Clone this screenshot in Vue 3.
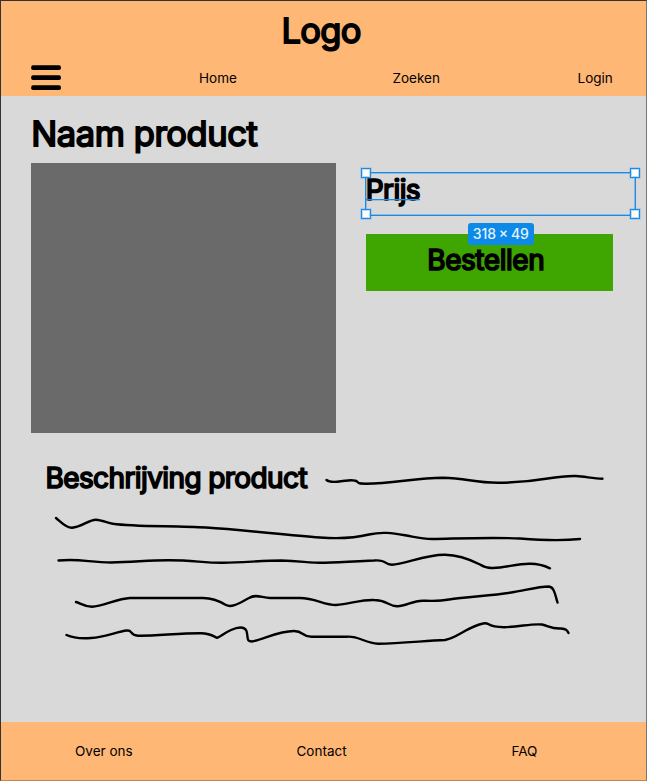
<script setup>
const handles = ['nw', 'ne', 'sw', 'se']
const strokes = [
  'M56 518C61 522 66 528 72 527.8C82 527 89 519.5 96 519.7C101 520 107 522.5 113 523.7C135 527 175 525.5 206 527.5C245 530 285 535 320 537.5C340 539 357 537.5 369 534.5C382 531.5 392 533 405 535.3C415 537 422 539 432 539C460 538.5 492 537 520 538.5C545 540.5 562 541 580 539',
  'M58.500 560.500C80 558.500 90 562.500 111 562.500C135 562 148 560.200 168 560.200C192 560 204 563 223 562.800C245 562.500 262 560.500 281 560.500C302 561 309 563 325 562.800C342 562.500 362 561 374 560.500C388 559.500 383 564.500 392 564.800C404 564.500 426 554.500 445 554.800C460 555 472 560.500 480 564.500C484 567 487 568.500 493 568C505 567.500 517 564 529 563.800C538 563.500 544 565.500 550 568.300',
  'M76 602C80 603 84 606.500 92 606.800C103 606.500 117 598.500 130 598H203C213 598 221 602 226 605C232 608.500 241 602 249 598C256 593.500 262 598 270 598H300C315 598 324 605 336 605C350 604 361 599.500 374 600C387 600 388 606 397 606.200C406 606.500 412 600.500 423 600.700C432 601 439 601.500 449 599.500C467 596.500 496 595.500 514 592C526 590 539 586.500 549 586.500C554 587 555 594 557.500 602.500',
  'M66.500 635C72 637.500 81 638.700 91 638C106 637 117 631.500 127 630.500C133 630 129 635 138 635.700C156 636 180 633 201 633.200C211 633.500 213 636 217 637.800C221 636.500 224 633 231 630C238 627 244 626 246.500 631C248.500 638 246 641.500 252 641.500C264 639 279 631 294 631C304 631 302 637 312 636.700H347C359 636 365 643 378 643.800C401 643.500 423 641 445 640C457 638 467 627 483 623.500C490 621.500 485 627 504 627.200C521 626.500 532 623.500 542 624.500C549 626 551 629 561 628.500C566 629 567 630 568.500 633',
]
</script>

<template>
  <div class="page">
    <header class="header">
      <h1 class="logo">Logo</h1>
      <nav class="nav">
        <svg class="burger" width="30" height="26" viewBox="0 0 30 26">
          <rect x="0.200" y="0.200" width="29.700" height="4.900" rx="1.800" />
          <rect x="0.200" y="10.200" width="29.700" height="4.900" rx="1.800" />
          <rect x="0.200" y="20.200" width="29.700" height="4.900" rx="1.800" />
        </svg>
        <a class="home">Home</a>
        <a class="search">Zoeken</a>
        <a class="login">Login</a>
      </nav>
    </header>

    <main class="main">
      <h2 class="title">Naam product</h2>
      <div class="product">
        <div class="photo"></div>
        <div class="purchase">
          <div class="price">
            <span class="price-text">Prijs</span>
            <i v-for="h in handles" :key="h" class="handle" :class="h"></i>
            <span class="size">318 × 49</span>
          </div>
          <div class="order">Bestellen</div>
        </div>
      </div>
      <div class="description">
        <h3 class="subtitle">Beschrijving product</h3>
        <svg class="scribble" width="281" height="20" viewBox="324 470 281 20">
          <path d="M326.500 480C329 482 336 482 341 481.200C348 480.500 354 479 357 481.500C359 483.500 359 483.500 366 483.700C393 483.500 415 478 443 477.700C467 478 473 482.700 498 482.700C545 482.500 549 475.500 576 476C585 476.500 593 478.500 602.500 478.800" />
        </svg>
      </div>
      <svg class="scribble" width="645" height="150" viewBox="1 504 645 150">
        <path v-for="(d, i) in strokes" :key="i" :d="d" />
      </svg>
    </main>

    <footer class="footer">
      <a class="about">Over ons</a>
      <a class="contact">Contact</a>
      <a class="faq">FAQ</a>
    </footer>
  </div>
</template>

<style>
body {
  background: #d9d9d9;
}
</style>

<style scoped>
.page {
  box-sizing: border-box;
  width: 647px;
  height: 781px;
  display: flex;
  flex-direction: column;
  border: 1px solid #333;
  border-right-color: #777;
  border-bottom-color: #bf8757;
  background: #d9d9d9;
  color: #000;
  font-family: Inter, "Liberation Sans", sans-serif;
  overflow: hidden;
}
h1, h2, h3 {
  margin: 0;
  font-weight: 400;
}
.header {
  height: 94.600px;
  flex: none;
  background: #ffb775;
}
.logo {
  margin-left: 280.500px;
  padding-top: 8px;
  height: 45px;
  line-height: 44px;
  font-size: 34.500px;
  letter-spacing: -0.700px;
  -webkit-text-stroke: 1.800px #000;
}
.nav {
  display: flex;
  align-items: center;
  height: 26px;
  padding: 11px 0 0 30px;
  font-size: 13.500px;
}
.burger {
  display: block;
}
.home {
  width: 193.500px;
  margin-left: 138px;
}
.search {
  width: 185px;
}
.main {
  height: 626px;
  flex: none;
}
.title {
  height: 67.400px;
  padding: 16px 0 0 30.300px;
  box-sizing: border-box;
  line-height: 44px;
  font-size: 34.500px;
  letter-spacing: -0.450px;
  -webkit-text-stroke: 1.800px #000;
}
.product {
  display: flex;
  gap: 29.500px;
  padding-left: 30.300px;
}
.photo {
  width: 305px;
  height: 270px;
  background: #6a6a6a;
}
.purchase {
  padding-top: 9px;
}
.price {
  position: relative;
  box-sizing: border-box;
  width: 271px;
  height: 44px;
  margin-left: -1px;
  border: 1px solid #1a8ce8;
  box-shadow: inset 0 0 0 1px rgba(26, 140, 232, 0.4);
  line-height: 34px;
  font-size: 28px;
}
.price-text {
  position: relative;
  display: inline-block;
  letter-spacing: -0.600px;
  -webkit-text-stroke: 1.700px #000;
}
.price-text::after {
  content: "";
  position: absolute;
  left: 0;
  right: 0;
  top: 26px;
  height: 1px;
  background: #1a8ce8;
  box-shadow: 0 1px 0 rgba(26, 140, 232, 0.3);
}
.handle {
  position: absolute;
  box-sizing: border-box;
  width: 10px;
  height: 10px;
  border: 1px solid #1a8ce8;
  box-shadow: 0 0 0 0.500px rgba(26, 140, 232, 0.4), inset 0 0 0 1px rgba(26, 140, 232, 0.3);
  background: #fff;
}
.nw, .ne {
  top: -5px;
}
.sw, .se {
  bottom: -4px;
}
.nw, .sw {
  left: -5px;
}
.ne, .se {
  right: -5px;
}
.size {
  position: absolute;
  left: 102px;
  top: 50px;
  width: 66px;
  height: 22px;
  border-radius: 3px;
  background: #0d8ae8;
  color: #e4f2fd;
  line-height: 22px;
  font-size: 14px;
  font-weight: 500;
  word-spacing: -1px;
  text-align: center;
  white-space: nowrap;
}
.order {
  width: 247px;
  height: 57.500px;
  margin-top: 18px;
  padding-left: 61.500px;
  box-sizing: border-box;
  background: #3fa500;
  line-height: 52px;
  font-size: 28px;
  letter-spacing: -0.450px;
  -webkit-text-stroke: 1.700px #000;
}
.description {
  display: flex;
  height: 71px;
  padding-left: 44.500px;
}
.subtitle {
  width: 278.500px;
  padding-top: 28px;
  line-height: 34px;
  font-size: 28px;
  letter-spacing: -0.600px;
  white-space: nowrap;
  -webkit-text-stroke: 1.700px #000;
}
.scribble {
  display: block;
  fill: none;
  stroke: #000;
  stroke-width: 2.400;
  stroke-linecap: round;
  stroke-linejoin: round;
}
.description .scribble {
  margin-top: 37px;
}
.footer {
  display: flex;
  align-items: center;
  flex: 1;
  padding-left: 74px;
  background: #ffb775;
  font-size: 13.500px;
}
.about {
  width: 221.500px;
}
.contact {
  width: 215px;
}
</style>
